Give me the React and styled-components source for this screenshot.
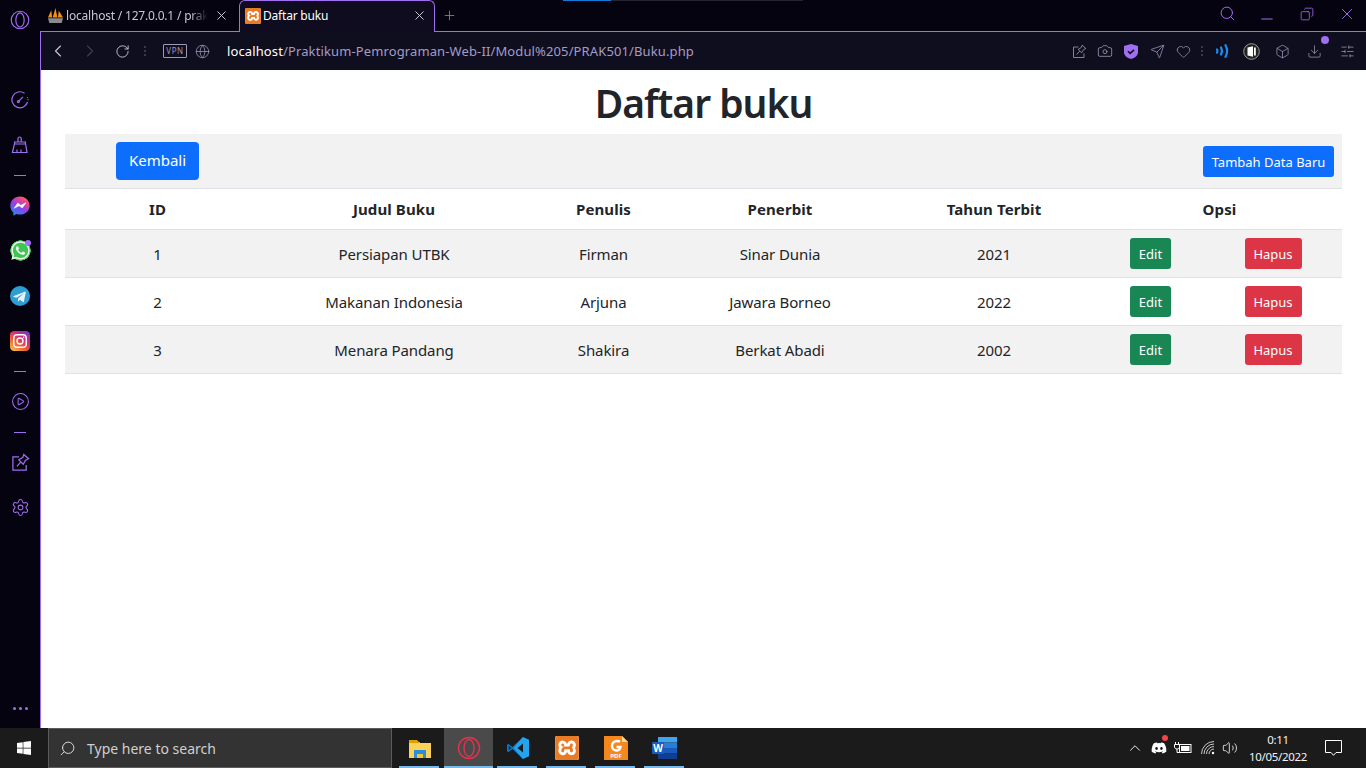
import styled, { createGlobalStyle } from 'styled-components';
import {
  Box,
  Camera,
  ChevronLeft,
  ChevronRight,
  ChevronUp,
  CirclePlay,
  Copy,
  Download,
  Globe,
  Heart,
  Minus,
  Plus,
  RotateCw,
  Search,
  Send,
  Settings,
  SlidersHorizontal,
  Volume2,
  X,
} from 'lucide-react';
import { FaDiscord, FaWhatsapp, FaWindows } from 'react-icons/fa';
import { SiXampp } from 'react-icons/si';

const PURPLE = '#a06ef0';
const SANS = '"Noto Sans", "Open Sans", sans-serif';

const GlobalStyle = createGlobalStyle`
  * {
    box-sizing: border-box;
  }

  body {
    margin: 0;
    font-family: ${SANS};
    background: #fff;
  }
`;

const Screen = styled.div`
  position: relative;
  display: flex;
  flex-direction: column;
  width: 1366px;
  height: 768px;
  overflow: hidden;
`;

const LoadLine = styled.div`
  position: absolute;
  top: 0;
  left: 563px;
  width: 240px;
  height: 1px;
  background: linear-gradient(90deg, #1379d6 0 48px, #23252e 48px);
`;

const Browser = styled.div`
  flex: 1;
  display: flex;
  min-height: 0;
  background: #05030f;
`;

const Rail = styled.nav`
  display: flex;
  flex-direction: column;
  align-items: center;
  flex: 0 0 40px;
  padding-bottom: 18px;
  color: ${PURPLE};
`;

const RailLogo = styled.div`
  display: flex;
  align-items: center;
  justify-content: center;
  height: 40px;
  margin-bottom: 37px;
`;

const RailItem = styled.div`
  position: relative;
  display: flex;
  align-items: center;
  justify-content: center;
  width: 100%;
  height: 45px;
`;

const RailDivider = styled.div`
  width: 12px;
  height: 16px;
  background: linear-gradient(${PURPLE}, ${PURPLE}) center / 12px 1px no-repeat;
`;

const RailDots = styled.div`
  margin-top: auto;
  font-size: 0;
  display: flex;
  gap: 3px;
`;

const Dot = styled.span`
  width: 3px;
  height: 3px;
  border-radius: 50%;
  background: ${PURPLE};
`;

const Notice = styled.span`
  position: absolute;
  top: 12px;
  right: 9px;
  width: 6px;
  height: 6px;
  border-radius: 50%;
  background: ${PURPLE};
`;

const Main = styled.div`
  flex: 1;
  display: flex;
  flex-direction: column;
  min-width: 0;
`;

const TabStrip = styled.div`
  display: flex;
  align-items: stretch;
  height: 31px;
  color: ${PURPLE};
`;

const Tab = styled.div`
  position: relative;
  z-index: 1;
  display: flex;
  align-items: center;
  gap: 2px;
  width: ${(p) => p.$width}px;
  height: 32px;
  margin-left: ${(p) => p.$left}px;
  padding: 0 7px 2px 5px;
  font-size: 12px;
  letter-spacing: -0.2px;
  color: ${(p) => (p.$active ? '#fff' : '#c8c6d2')};
  background: ${(p) => (p.$active ? '#0e0c1e' : 'transparent')};
  border: 1px solid ${(p) => (p.$active ? PURPLE : 'transparent')};
  border-bottom: none;
  border-radius: 6px 6px 0 0;
`;

const TabTitle = styled.span`
  flex: 1;
  white-space: nowrap;
  overflow: hidden;
  mask-image: ${(p) => (p.$fade ? 'linear-gradient(90deg, #000 88%, transparent)' : 'none')};
`;

const TabClose = styled(X)`
  flex: none;
  color: #d8d6e2;
  margin-left: 4px;
`;

const NewTab = styled.div`
  display: flex;
  align-items: center;
  padding: 0 0 1px 7px;
`;

const WindowControls = styled.div`
  display: flex;
  align-items: center;
  gap: 24px;
  margin-left: auto;
  padding: 0 10px 4px 0;

  & > :first-child {
    margin-right: -2px;
  }
`;

const MinimizeIcon = styled(Minus)`
  transform: translateY(5px);
`;

const RestoreIcon = styled(Copy)`
  transform: scaleX(-1);
`;

const Content = styled.div`
  flex: 1;
  display: flex;
  flex-direction: column;
  min-height: 0;
  border-left: 1px solid ${PURPLE};
`;

const Toolbar = styled.div`
  display: flex;
  align-items: center;
  height: 39px;
  padding: 0 3px 0 0;
  color: #9d99b8;
  background: #0f0e1f;
  border-top: 1px solid ${PURPLE};
`;

const ToolSlot = styled.div`
  position: relative;
  display: flex;
  align-items: center;
  justify-content: ${(p) => (p.$end ? 'flex-end' : 'center')};
  flex: 0 0 ${(p) => p.$w || 26}px;
  color: ${(p) => p.$color || 'inherit'};
`;

const VpnTag = styled.span`
  display: flex;
  align-items: center;
  justify-content: center;
  width: 24px;
  height: 14px;
  font-size: 8px;
  letter-spacing: 0.6px;
  line-height: 1;
  border: 1px solid #9d99b8;
  border-radius: 1px;
`;

const Url = styled.div`
  flex: 1;
  padding-left: 10px;
  font-size: 13px;
  letter-spacing: 0.12px;
  white-space: nowrap;
  color: #a29cc8;
`;

const UrlHost = styled.span`
  color: #fff;
`;

const VDots = styled.span`
  display: flex;
  flex-direction: column;
  gap: 2px;
`;

const VDot = styled.span`
  width: 2px;
  height: 2px;
  background: #3a3850;
`;

const DownloadBadge = styled.span`
  position: absolute;
  top: -8px;
  right: 2px;
  width: 8px;
  height: 8px;
  border-radius: 50%;
  background: ${PURPLE};
`;

const Page = styled.main`
  flex: 1;
  padding: 9px 24px 0;
  background: #fff;
  color: #212529;
`;

const Title = styled.h1`
  margin: 0 0 7px;
  font-size: 39px;
  font-weight: 600;
  line-height: 48px;
  letter-spacing: -1px;
  text-align: center;
`;

const Table = styled.table`
  width: 100%;
  table-layout: fixed;
  border-collapse: collapse;
  font-size: 15px;
  line-height: 24px;

  tr {
    border-bottom: 1px solid #dee2e6;
  }

  tr:nth-child(odd) {
    background: #f2f2f2;
  }

  th,
  td {
    padding: 8px;
    text-align: center;
    vertical-align: middle;
    letter-spacing: -0.1px;
  }

  th {
    font-weight: 700;
    letter-spacing: 0.1px;
  }
`;

const EndCell = styled.td`
  && {
    text-align: right;
  }
`;

const COLOURS = { blue: '#0d6efd', green: '#198754', red: '#dc3545' };

const Button = styled.a`
  display: inline-block;
  width: ${(p) => p.$w}px;
  height: ${(p) => (p.$large ? 38 : 31)}px;
  padding-top: ${(p) => (p.$large ? 0 : 1)}px;
  font-size: ${(p) => (p.$large ? 15 : 13)}px;
  line-height: ${(p) => (p.$large ? 37 : 31)}px;
  letter-spacing: 0;
  text-align: center;
  white-space: nowrap;
  color: #fff;
  background: ${(p) => COLOURS[p.$tone]};
  border-radius: ${(p) => (p.$large ? 4 : 3)}px;
`;

const Taskbar = styled.footer`
  display: flex;
  align-items: stretch;
  flex: 0 0 40px;
  color: #fff;
  background: #1b1b1b;
`;

const Start = styled.div`
  display: flex;
  align-items: center;
  justify-content: center;
  flex: 0 0 48px;
`;

const SearchBox = styled.div`
  display: flex;
  align-items: center;
  gap: 11px;
  flex: 0 0 344px;
  margin-right: 3px;
  padding-left: 10px;
  font-size: 14px;
  color: #cfcfcf;
  background: #333;
  border: 1px solid #5c5c5c;
`;

const MirrorSearch = styled(Search)`
  transform: scaleX(-1);
  color: #e4e4e4;
`;

const Apps = styled.div`
  display: flex;
`;

const AppSlot = styled.div`
  position: relative;
  display: flex;
  align-items: center;
  justify-content: center;
  width: 49px;
  background: ${(p) => (p.$active ? '#4a4a4a' : 'transparent')};

  &::after {
    content: '';
    position: absolute;
    bottom: 0;
    left: ${(p) => (p.$active ? 0 : 4)}px;
    right: ${(p) => (p.$active ? 0 : 5)}px;
    height: 2px;
    background: #76b9ed;
  }
`;

const Tray = styled.div`
  display: flex;
  align-items: center;
  margin-left: auto;
`;

const TraySlot = styled.div`
  position: relative;
  display: flex;
  align-items: center;
  justify-content: center;
  flex: 0 0 ${(p) => p.$w}px;
`;

const RedDot = styled.span`
  position: absolute;
  top: -5px;
  right: 3px;
  width: 6px;
  height: 6px;
  border-radius: 50%;
  background: #f04747;
`;

const Clock = styled.div`
  flex: 0 0 66px;
  margin-left: 5px;
  font-size: 11.5px;
  line-height: 17px;
  letter-spacing: -0.3px;
  text-align: center;
  color: #f2f2f2;
`;

const OperaLogo = ({ size, color }) => (
  <svg width={size} height={size} viewBox="0 0 24 24" fill="none" stroke={color} strokeWidth="1.4">
    <circle cx="12" cy="12" r="10.5" />
    <ellipse cx="12" cy="12" rx="5" ry="8.5" />
  </svg>
);

const DialIcon = () => (
  <svg width="18" height="18" viewBox="0 0 18 18" fill="none" stroke="currentColor" strokeWidth="1.2">
    <path d="M13.5 2.2A8 8 0 1 0 16.6 11" />
    <path d="M7.8 10.2 12 5.8" />
    <circle cx="7.4" cy="10.6" r="1" />
    <path d="M16.6 6.5v.1M17 8.6v.1" strokeLinecap="round" />
  </svg>
);

const BrushIcon = () => (
  <svg width="18" height="18" viewBox="0 0 18 18" fill="none" stroke="currentColor" strokeWidth="1.2">
    <path d="M7 6V2.400C7 1.600 7.800 1 8.600 1s1.600.6 1.600 1.400V6" />
    <path d="M3.600 8V6h10.800v2" />
    <path d="M3.400 8h11.200l1.400 8.500H1.400z" />
    <path d="M6 16.500v-3M10 16.500v-3" />
  </svg>
);

const PinBoxIcon = ({ size, strokeWidth }) => (
  <svg width={size} height={size} viewBox="0 0 20 20" fill="none" stroke="currentColor" strokeWidth={strokeWidth}>
    <path d="M8.500 4H2v14h14v-5.500" />
    <path d="M13.500 1.500 18.500 6l-3.200 1.600-2.400 4.200-4.700-4.600 4.300-2.600z" />
    <path d="M10.200 9.600 6.200 14" />
  </svg>
);

const MessengerLogo = () => (
  <svg width="22" height="22" viewBox="0 0 24 24">
    <defs>
      <linearGradient id="messenger" x1="0.2" y1="1" x2="0.8" y2="0">
        <stop offset="0" stopColor="#1492f5" />
        <stop offset="0.45" stopColor="#8f3ff0" />
        <stop offset="0.8" stopColor="#f0487f" />
        <stop offset="1" stopColor="#fb7a5c" />
      </linearGradient>
    </defs>
    <path
      d="M12 1.500C6 1.500 1.500 5.900 1.500 11.600c0 3 1.200 5.600 3.300 7.400v3.500l3.300-1.800c1.200.4 2.500.6 3.900.6 6 0 10.500-4.400 10.500-9.700S18 1.500 12 1.500z"
      fill="url(#messenger)"
    />
    <path d="m5.500 14.500 4-5.700 3.400 2.500 5.600-2.800-4 5.700-3.400-2.500z" fill="#fff" stroke="#fff" strokeWidth="0.6" strokeLinejoin="round" />
  </svg>
);

const WhatsappBase = styled.span`
  display: flex;
  align-items: center;
  justify-content: center;
  width: 21px;
  height: 21px;
  border-radius: 50%;
  color: #f0f0f0;
  background: radial-gradient(circle, #3ec651 0 68%, transparent 70%);
`;

const TelegramLogo = () => (
  <svg width="20" height="20" viewBox="0 0 24 24">
    <circle cx="12" cy="12" r="12" fill="#2b9fd4" />
    <path
      d="M4.500 12 17.800 6.800c.7-.3 1.300.2 1.100 1.200l-2.200 10.600c-.2.800-.7 1-1.300.6l-3.500-2.600-1.700 1.600c-.2.200-.4.300-.7.300l.2-3.400 6.300-5.700c.3-.3-.1-.4-.4-.2l-7.800 4.900-3.300-1c-.7-.2-.7-.7.200-1.100z"
      fill="#e8f1f7"
    />
  </svg>
);

const InstagramLogo = () => (
  <svg width="20" height="20" viewBox="0 0 24 24">
    <defs>
      <linearGradient id="insta" x1="0.1" y1="1" x2="0.9" y2="0">
        <stop offset="0" stopColor="#fdc14d" />
        <stop offset="0.35" stopColor="#f0622f" />
        <stop offset="0.65" stopColor="#d4297f" />
        <stop offset="1" stopColor="#6a3fc8" />
      </linearGradient>
    </defs>
    <rect width="24" height="24" rx="5" fill="url(#insta)" />
    <rect x="4.500" y="4.500" width="15" height="15" rx="4" fill="none" stroke="#fff" strokeWidth="1.7" />
    <circle cx="12" cy="12" r="3.600" fill="none" stroke="#fff" strokeWidth="1.7" />
    <circle cx="16.400" cy="7.600" r="1" fill="#fff" />
  </svg>
);

const SailsLogo = () => (
  <svg width="17" height="17" viewBox="0 0 18 18">
    <path d="M1 11 4.500 3.500 5.500 11zM6 11l3-10 2 10zM11.500 11 12.500 4 17 11z" fill="#f29111" />
    <path d="M1 12h16l-1.500 5h-13z" fill="#8a8a8a" />
  </svg>
);

const XamppSquare = styled.span`
  display: flex;
  align-items: center;
  justify-content: center;
  width: ${(p) => p.$size}px;
  height: ${(p) => p.$size}px;
  border-radius: 2px;
  color: #ea7b24;
  background: #fff;
`;

const ShieldIcon = () => (
  <svg width="14" height="15" viewBox="0 0 14 15">
    <path d="M7 0 14 2v6.500c0 3-3 5.300-7 6.500-4-1.200-7-3.500-7-6.500V2z" fill={PURPLE} />
    <path d="m4 7.200 2.200 2.200L10 5.800" fill="none" stroke="#0f0e1f" strokeWidth="1.600" />
  </svg>
);

const FlowIcon = () => (
  <svg width="15" height="14" viewBox="0 0 15 14" fill="none" stroke="#1b8cf0" strokeWidth="2.200" strokeLinecap="round">
    <path d="M2 5.500c.6 1 .6 2.200 0 3.200" />
    <path d="M6 3.500c1.200 2.200 1.200 4.800 0 7" />
    <path d="M10.500 1.200c2 3.500 2 8 0 11.600" />
  </svg>
);

const WalletIcon = () => (
  <svg width="17" height="17" viewBox="0 0 17 17">
    <circle cx="8.500" cy="8.500" r="7.800" fill="#222" stroke="#9a9a9a" />
    <path d="M4.500 4.500 10 3.200v10.600l-5.500-1.300z" fill="#fff" />
    <path d="M11 4.500h1.800v8H11z" fill="#fff" />
  </svg>
);

const FolderLogo = () => (
  <svg width="22" height="20" viewBox="0 0 22 20">
    <path d="M0 2h8l2 2h1v3H0z" fill="#e0a100" />
    <path d="M0 5h22v15H0z" fill="#fbd35b" />
    <path d="M5 12h12v8h-3v-4H8v4H5z" fill="#2b8fd8" />
    <path d="M8 16h6v4H8z" fill="#f6c13c" />
  </svg>
);

const VsCodeLogo = () => (
  <svg width="24" height="24" viewBox="0 0 24 24">
    <path d="M17 1 6.500 11 2.500 8 1 8.800v6.400l1.500.8 4-3L17 23z" fill="#0b78c8" />
    <path d="M17 1 23 3.800v16.400L17 23l-9.500-11z" fill="#22a4ef" />
    <path d="M17 7.500 11.500 12l5.500 4.500z" fill="#1b1b1b" />
    <path d="m2.800 9.800 2.400 2.200-2.400 2.200z" fill="#1b1b1b" />
  </svg>
);

const FoxitLogo = () => (
  <svg width="24" height="24" viewBox="0 0 24 24">
    <path d="M0 0h18l6 6v18H0z" fill="#f5871f" />
    <path d="M18 0l6 6h-6z" fill="#ffd79a" />
    <path d="M16 5.500c-4.500-1.500-8 .8-8 4.500 0 3 2 4.500 4.500 4.500 2 0 3.500-1 4-3.500h-4" fill="none" stroke="#fff" strokeWidth="2.400" />
    <text x="12" y="22" textAnchor="middle" fontSize="6" fontWeight="700" fill="#fff" fontFamily={SANS}>PDF</text>
  </svg>
);

const WordLogo = () => (
  <svg width="25" height="22" viewBox="0 0 25 22">
    <path d="M6 0h19v5.500H6z" fill="#41a5ee" />
    <path d="M6 5.500h19V11H6z" fill="#2b7cd3" />
    <path d="M6 11h19v5.500H6z" fill="#185abd" />
    <path d="M6 16.500h19V22H6z" fill="#103f91" />
    <rect x="0" y="5" width="12" height="12" rx="1" fill="#1a5cbf" />
    <text x="6" y="15" textAnchor="middle" fontSize="10" fontWeight="700" fill="#fff" fontFamily={SANS}>W</text>
  </svg>
);

const BatteryIcon = () => (
  <svg width="18" height="14" viewBox="0 0 18 14" fill="none" stroke="#fff">
    <path d="M1.500 1v2.500M4.500 1v2.500M0.500 3.500h5V6c0 1.200-1.200 2-2.500 2S.5 7.200.5 6zM3 8v3.500h2" />
    <rect x="5.500" y="3.500" width="11.500" height="8" />
    <rect x="7" y="5" width="8.500" height="5" fill="#fff" stroke="none" />
  </svg>
);

const WifiIcon = () => (
  <svg width="14" height="14" viewBox="0 0 14 14" fill="none" stroke="#c8c8c8">
    <path d="M.5 13A12.500 12.500 0 0 1 13 .5" />
    <path d="M3 13A10 10 0 0 1 13 3" />
    <path d="M5.500 13A7.500 7.500 0 0 1 13 5.500" />
    <path d="M8 13a5 5 0 0 1 5-5" />
    <circle cx="12" cy="12" r="1.200" fill="#fff" stroke="none" />
  </svg>
);

const NotifyIcon = () => (
  <svg width="17" height="16" viewBox="0 0 17 16" fill="none" stroke="#fff">
    <path d="M.5.500h16v12h-5.500l-2.500 2.800L6 12.500H.5z" />
  </svg>
);

const BOOKS = [
  { id: 1, title: 'Persiapan UTBK', author: 'Firman', publisher: 'Sinar Dunia', year: 2021 },
  { id: 2, title: 'Makanan Indonesia', author: 'Arjuna', publisher: 'Jawara Borneo', year: 2022 },
  { id: 3, title: 'Menara Pandang', author: 'Shakira', publisher: 'Berkat Abadi', year: 2002 },
];

const COLUMNS = [185, 288, 131, 222, 206, 107, 138];

const App = () => (
  <>
    <GlobalStyle />
    <Screen>
      <LoadLine />
      <Browser>
        <Rail>
          <RailLogo>
            <OperaLogo size={20} color={PURPLE} />
          </RailLogo>
          <RailItem><DialIcon /></RailItem>
          <RailItem><BrushIcon /></RailItem>
          <RailDivider />
          <RailItem><MessengerLogo /></RailItem>
          <RailItem>
            <WhatsappBase><FaWhatsapp size={21} /></WhatsappBase>
            <Notice />
          </RailItem>
          <RailItem><TelegramLogo /></RailItem>
          <RailItem><InstagramLogo /></RailItem>
          <RailDivider />
          <RailItem><CirclePlay size={19} strokeWidth={1.3} /></RailItem>
          <RailDivider />
          <RailItem><PinBoxIcon size={19} strokeWidth={1.3} /></RailItem>
          <RailItem><Settings size={19} strokeWidth={1.3} /></RailItem>
          <RailDots><Dot /><Dot /><Dot /></RailDots>
        </Rail>
        <Main>
          <TabStrip>
            <Tab $width={196} $left={1}>
              <SailsLogo />
              <TabTitle $fade>localhost / 127.0.0.1 / prak501</TabTitle>
              <TabClose size={15} strokeWidth={1.5} />
            </Tab>
            <Tab $active $width={196} $left={2}>
              <XamppSquare $size={16}><SiXampp size={16} /></XamppSquare>
              <TabTitle>Daftar buku</TabTitle>
              <TabClose size={15} strokeWidth={1.5} />
            </Tab>
            <NewTab><Plus size={15} strokeWidth={1.3} /></NewTab>
            <WindowControls>
              <Search size={17} strokeWidth={1.4} />
              <MinimizeIcon size={18} strokeWidth={1.4} />
              <RestoreIcon size={14} strokeWidth={1.4} />
              <X size={18} strokeWidth={1.3} />
            </WindowControls>
          </TabStrip>
          <Content>
            <Toolbar>
              <ToolSlot $w={33} $color="#c9c6dc"><ChevronLeft size={20} strokeWidth={1.3} /></ToolSlot>
              <ToolSlot $w={32} $color="#3f3d58"><ChevronRight size={20} strokeWidth={1.3} /></ToolSlot>
              <ToolSlot $w={33} $color="#c9c6dc"><RotateCw size={15} strokeWidth={1.5} /></ToolSlot>
              <ToolSlot $w={11}><VDots><VDot /><VDot /><VDot /></VDots></ToolSlot>
              <ToolSlot $w={37} $end><VpnTag>VPN</VpnTag></ToolSlot>
              <ToolSlot $w={30}><Globe size={15} strokeWidth={1.2} /></ToolSlot>
              <Url>
                <UrlHost>localhost</UrlHost>/Praktikum-Pemrograman-Web-II/Modul%205/PRAK501/Buku.php
              </Url>
              <ToolSlot><PinBoxIcon size={15} strokeWidth={1.1} /></ToolSlot>
              <ToolSlot><Camera size={16} strokeWidth={1.2} /></ToolSlot>
              <ToolSlot><ShieldIcon /></ToolSlot>
              <ToolSlot><Send size={15} strokeWidth={1.2} /></ToolSlot>
              <ToolSlot><Heart size={15} strokeWidth={1.2} /></ToolSlot>
              <ToolSlot $w={12}><VDots><VDot /><VDot /><VDot /></VDots></ToolSlot>
              <ToolSlot $w={28}><FlowIcon /></ToolSlot>
              <ToolSlot $w={31}><WalletIcon /></ToolSlot>
              <ToolSlot $w={31}><Box size={15} strokeWidth={1.2} /></ToolSlot>
              <ToolSlot $w={33}>
                <Download size={15} strokeWidth={1.2} />
                <DownloadBadge />
              </ToolSlot>
              <ToolSlot $w={32}><SlidersHorizontal size={15} strokeWidth={1.2} /></ToolSlot>
            </Toolbar>
            <Page>
              <Title>Daftar buku</Title>
              <Table>
                <colgroup>
                  {COLUMNS.map((width) => (
                    <col key={width} width={width} />
                  ))}
                </colgroup>
                <tbody>
                  <tr>
                    <td><Button $large $tone="blue" $w={83}>Kembali</Button></td>
                    <td colSpan={4} />
                    <EndCell colSpan={2}><Button $tone="blue" $w={131}>Tambah Data Baru</Button></EndCell>
                  </tr>
                  <tr>
                    <th>ID</th>
                    <th>Judul Buku</th>
                    <th>Penulis</th>
                    <th>Penerbit</th>
                    <th>Tahun Terbit</th>
                    <th colSpan={2}>Opsi</th>
                  </tr>
                  {BOOKS.map((book) => (
                    <tr key={book.id}>
                      <td>{book.id}</td>
                      <td>{book.title}</td>
                      <td>{book.author}</td>
                      <td>{book.publisher}</td>
                      <td>{book.year}</td>
                      <td><Button $tone="green" $w={41}>Edit</Button></td>
                      <td><Button $tone="red" $w={57}>Hapus</Button></td>
                    </tr>
                  ))}
                </tbody>
              </Table>
            </Page>
          </Content>
        </Main>
      </Browser>
      <Taskbar>
        <Start><FaWindows size={16} /></Start>
        <SearchBox>
          <MirrorSearch size={17} strokeWidth={1.3} />
          Type here to search
        </SearchBox>
        <Apps>
          <AppSlot><FolderLogo /></AppSlot>
          <AppSlot $active><OperaLogo size={24} color="#e8304f" /></AppSlot>
          <AppSlot><VsCodeLogo /></AppSlot>
          <AppSlot><XamppSquare $size={24}><SiXampp size={24} /></XamppSquare></AppSlot>
          <AppSlot><FoxitLogo /></AppSlot>
          <AppSlot><WordLogo /></AppSlot>
        </Apps>
        <Tray>
          <TraySlot $w={24}><ChevronUp size={18} strokeWidth={1.2} /></TraySlot>
          <TraySlot $w={24}>
            <FaDiscord size={16} />
            <RedDot />
          </TraySlot>
          <TraySlot $w={24}><BatteryIcon /></TraySlot>
          <TraySlot $w={25}><WifiIcon /></TraySlot>
          <TraySlot $w={20}><Volume2 size={16} strokeWidth={1.2} /></TraySlot>
          <Clock>
            <div>0:11</div>
            <div>10/05/2022</div>
          </Clock>
          <TraySlot $w={44}><NotifyIcon /></TraySlot>
          <TraySlot $w={11} />
        </Tray>
      </Taskbar>
    </Screen>
  </>
);

export default App;
